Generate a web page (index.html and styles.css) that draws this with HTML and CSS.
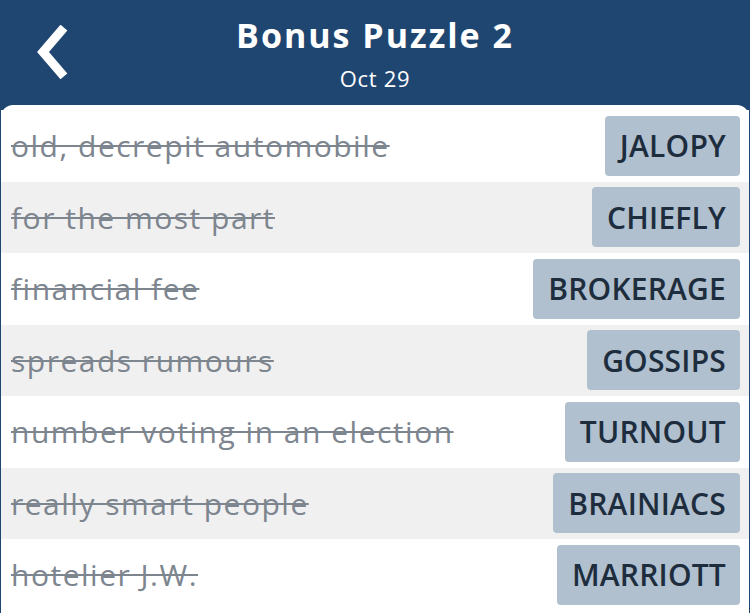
FILE: index.html
```html
<!DOCTYPE html>
<html>
<head>
<meta charset="utf-8">
<link rel="stylesheet" href="styles.css">
</head>
<body>
<div class="app">
  <header class="header">
    <div class="back">
      <svg width="40" height="56" viewBox="0 0 40 56"><path d="M27 6 L9 27 L27 48" fill="none" stroke="#fff" stroke-width="9" stroke-linecap="square" stroke-linejoin="miter"/></svg>
    </div>
    <div class="titles">
      <div class="title">Bonus Puzzle 2</div>
      <div class="subtitle">Oct 29</div>
    </div>
  </header>
  <main class="card">
    <div class="row"><span class="clue">old, decrepit automobile</span><span class="answer">JALOPY</span></div>
    <div class="row alt"><span class="clue">for the most part</span><span class="answer">CHIEFLY</span></div>
    <div class="row"><span class="clue">financial fee</span><span class="answer">BROKERAGE</span></div>
    <div class="row alt"><span class="clue">spreads rumours</span><span class="answer">GOSSIPS</span></div>
    <div class="row"><span class="clue">number voting in an election</span><span class="answer">TURNOUT</span></div>
    <div class="row alt"><span class="clue">really smart people</span><span class="answer">BRAINIACS</span></div>
    <div class="row"><span class="clue">hotelier J.W.</span><span class="answer">MARRIOTT</span></div>
  </main>
</div>
</body>
</html>
```

FILE: styles.css
```css
html, body {
  margin: 0;
  padding: 0;
  background: #1f4671;
}
body {
  width: 750px;
  height: 613px;
  overflow: hidden;
  font-family: "Open Sans", "Liberation Sans", sans-serif;
}
.app {
  display: flex;
  flex-direction: column;
  height: 613px;
}
.header {
  position: relative;
  height: 105px;
  flex: none;
  display: flex;
  justify-content: center;
  background: #1f4671;
  color: #fff;
}
.back {
  position: absolute;
  left: 34px;
  top: 25px;
}
.back svg { display: block; }
.titles {
  display: flex;
  flex-direction: column;
  align-items: center;
  padding-top: 12px;
}
.title {
  font-size: 34px;
  font-weight: 700;
  line-height: 46px;
  letter-spacing: 2px;
}
.subtitle {
  font-size: 22px;
  line-height: 30px;
  margin-top: 5px;
  letter-spacing: 0.7px;
}
.card {
  flex: 1;
  background: #fff;
  border-radius: 12px 12px 0 0;
  margin: 0 1px;
  padding-top: 5px;
  display: flex;
  flex-direction: column;
}
.row {
  height: 71.5px;
  flex: none;
  display: flex;
  align-items: center;
  justify-content: space-between;
  padding: 0 9px 0 10px;
  background: #fff;
}
.row.alt { background: #f0f0f0; }
.clue {
  font-size: 30px;
  color: #7d858f;
  letter-spacing: 1.5px;
  text-decoration: line-through;
  text-decoration-thickness: 2px;
  white-space: nowrap;
}
.answer {
  height: 60px;
  display: flex;
  align-items: center;
  padding: 0 14px 0 15px;
  background: #b0c0cf;
  border-radius: 4px;
  font-size: 30px;
  font-weight: 600;
  color: #1e2d3d;
  letter-spacing: 0.2px;
}
```
